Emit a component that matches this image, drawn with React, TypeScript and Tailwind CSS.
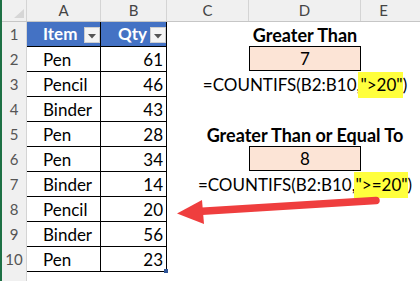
import React from "react";

type Item = { name: string; qty: number };

const items: Item[] = [
  { name: "Pen", qty: 61 },
  { name: "Pencil", qty: 46 },
  { name: "Binder", qty: 43 },
  { name: "Pen", qty: 28 },
  { name: "Pen", qty: 34 },
  { name: "Binder", qty: 14 },
  { name: "Pencil", qty: 20 },
  { name: "Binder", qty: 56 },
  { name: "Pen", qty: 23 },
];

// filter dropdown on table header cells
const FilterButton = () => (
  <div className="w-[16px] h-[16px] mt-[2px] shrink-0 bg-[#f4f4f4] border border-[#cfcfcf] flex items-center justify-center">
    <svg width="8" height="5" viewBox="0 0 8 5" className="mt-[3px]">
      <polygon points="0,0 8,0 4,4.5" fill="#555" />
    </svg>
  </div>
);

const Highlight = ({ children }: { children: React.ReactNode }) => (
  <span className="inline-block bg-[#ffff3d] leading-[26px] pl-[2px] -ml-[2px]">{children}</span>
);

const Formula = ({ crit }: { crit: string }) => (
  <span>
    =COUNTIFS(B2:B10,<Highlight>"{crit}"</Highlight>)
  </span>
);

// what sits in column D for each row (1-based)
const renderD = (row: number) => {
  switch (row) {
    case 1:
      return <span className="font-bold text-[18px]">Greater Than</span>;
    case 2:
      return "7";
    case 3:
      return <Formula crit=">20" />;
    case 5:
      return <span className="font-bold text-[18px]">Greater Than or Equal To</span>;
    case 6:
      return "8";
    case 7:
      return <Formula crit=">=20" />;
    default:
      return null;
  }
};

const isBox = (row: number) => row === 2 || row === 6;

const App = () => {
  const colLetters = [
    { l: "A", w: "w-[74px]" },
    { l: "B", w: "w-[66px]" },
    { l: "C", w: "w-[82px]" },
    { l: "D", w: "w-[112px]" },
  ];

  return (
    <div className="relative w-[420px] h-[281px] overflow-hidden bg-white flex font-[Lato,sans-serif] text-[17px] text-black">
      {/* window edge */}
      <div className="w-[2px] h-full bg-[#1e7145] shrink-0" />

      <div className="flex-1 flex flex-col">
        {/* column headers */}
        <div className="flex h-[22px] shrink-0 bg-[#f0f0f0] border-b border-[#c6c6c6] text-[#444] text-[15px]">
          <div className="w-[25px] h-full border-r border-[#d4d4d4] flex items-end justify-end pr-[2px] pb-[3px]">
            <svg width="10" height="9" viewBox="0 0 10 9">
              <polygon points="10,0 10,9 0,9" fill="#d6d6d6" />
            </svg>
          </div>
          {colLetters.map((c) => (
            <div key={c.l} className={`${c.w} h-full border-r border-[#d4d4d4] flex items-center justify-center`}>
              {c.l}
            </div>
          ))}
          <div className="flex-1 h-full flex items-center justify-center pr-[14px]">E</div>
        </div>

        {/* header row */}
        <div className="flex h-[25px] shrink-0">
          <div className="w-[25px] h-full bg-[#f0f0f0] border-r border-[#d4d4d4] flex items-center justify-center text-[#555] text-[15px]">
            1
          </div>
          <div className="w-[74px] h-full bg-[#4472c4] border-r border-b border-black flex items-center pl-[16px] text-white font-bold">
            <span className="flex-1">Item</span>
            <FilterButton />
          </div>
          <div className="w-[66px] h-full bg-[#4472c4] border-r border-b border-black flex items-center justify-end gap-[3px] text-white font-bold">
            <span>Qty</span>
            <FilterButton />
          </div>
          <div className="w-[82px] h-full" />
          <div className="w-[112px] h-full flex items-center justify-center whitespace-nowrap pt-[1px]">{renderD(1)}</div>
          <div className="flex-1" />
        </div>

        {/* data rows */}
        {items.map((it, i) => {
          const row = i + 2;
          return (
            <div key={row} className="flex h-[25px] shrink-0">
              <div className="w-[25px] h-full bg-[#f0f0f0] border-r border-[#d4d4d4] flex items-center justify-center text-[#555] text-[15px]">
                {row}
              </div>
              <div className="w-[74px] h-full border-r border-b border-black flex items-center pl-[16px] pt-[1px]">{it.name}</div>
              <div className="relative w-[66px] h-full border-r border-b border-black flex items-center justify-end pr-[3px] pt-[1px]">
                {it.qty}
                {row === 10 && <div className="absolute -right-[2px] -bottom-[2px] w-[4px] h-[4px] bg-[#2f5597]" />}
              </div>
              <div className="w-[82px] h-full" />
              <div
                className={`w-[112px] h-full flex items-center justify-center whitespace-nowrap pt-[1px] ${
                  isBox(row) ? "bg-[#fce4d6] border border-black -mt-px h-[26px]" : ""
                }`}
              >
                {renderD(row)}
              </div>
              <div className="flex-1" />
            </div>
          );
        })}

        {/* empty row below the table */}
        <div className="flex flex-1">
          <div className="w-[25px] h-full bg-[#f0f0f0] border-r border-[#d4d4d4]" />
        </div>
      </div>

      {/* red pointer arrow */}
      <svg className="absolute left-0 top-0 pointer-events-none" width="420" height="281" viewBox="0 0 420 281">
        <line x1="376" y1="200.5" x2="198" y2="211.5" stroke="#ef3e3e" strokeWidth="7.5" strokeLinecap="round" />
        <polygon points="177,213.5 202,200 204,224" fill="#ef3e3e" />
      </svg>
    </div>
  );
};

export default App;
